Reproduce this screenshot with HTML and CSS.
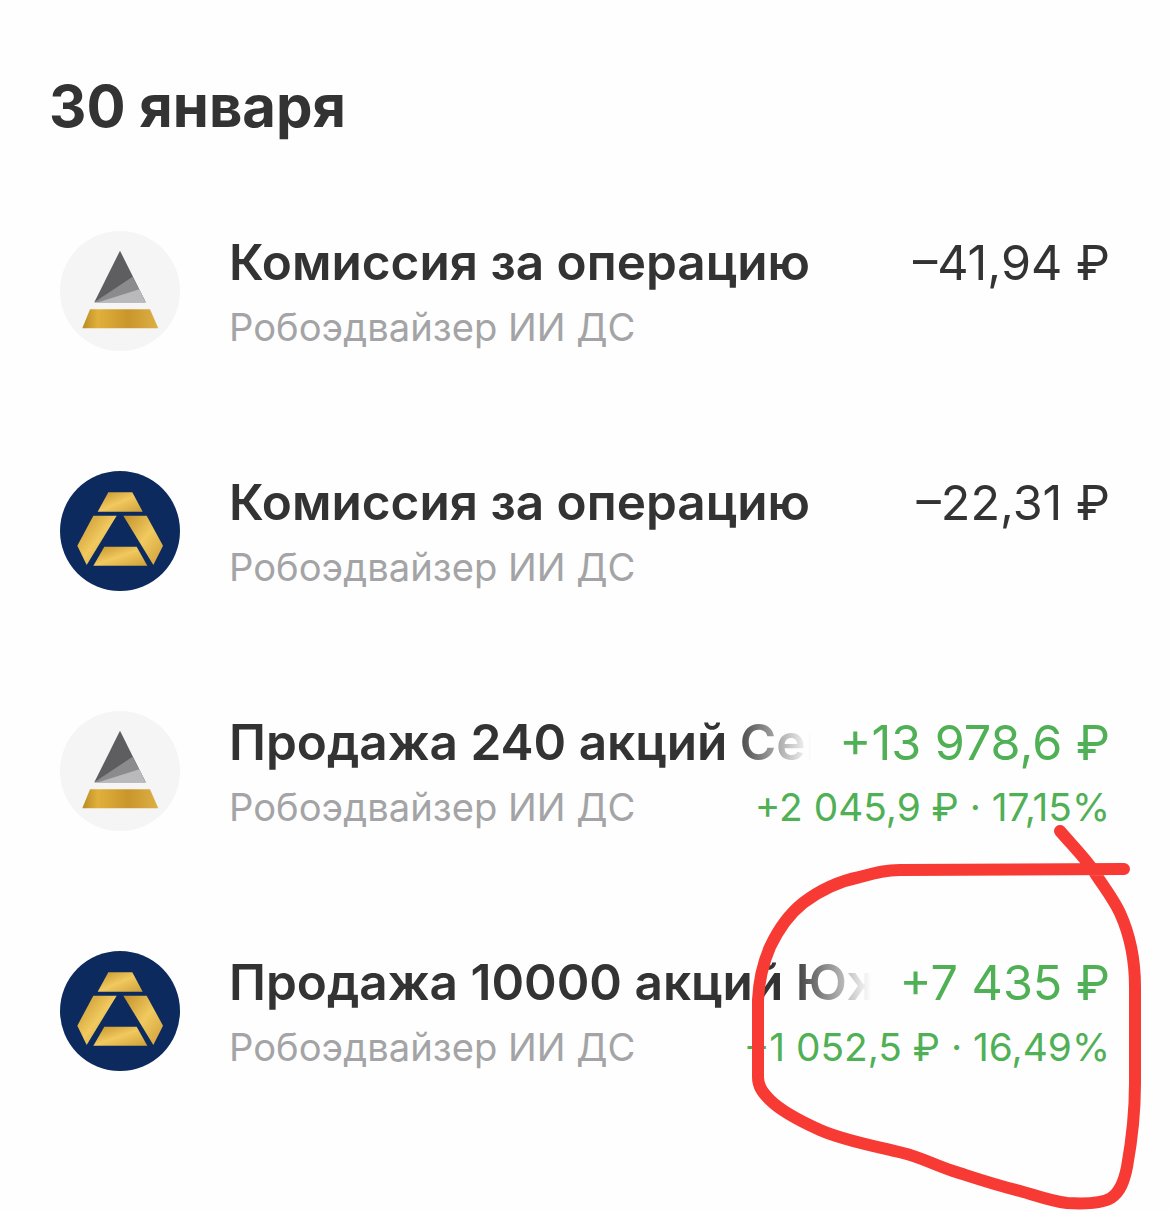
FILE: index.html
```html
<!DOCTYPE html>
<html>
<head>
<title>Операции</title>
<meta name="viewport" content="width=device-width, initial-scale=1">
<link rel="stylesheet" href="styles.css">
</head>
<body>
  <svg class="sprite" aria-hidden="true">
    <defs>
      <linearGradient id="gold" x1="0" y1="0" x2="1" y2="0">
        <stop offset="0" stop-color="#b98a22"/>
        <stop offset="0.2" stop-color="#e0b03c"/>
        <stop offset="0.6" stop-color="#c9962b"/>
        <stop offset="1" stop-color="#dcb045"/>
      </linearGradient>
      <linearGradient id="goldLight" x1="0" y1="0" x2="1" y2="1">
        <stop offset="0" stop-color="#c4912a"/>
        <stop offset="0.5" stop-color="#f0c95f"/>
        <stop offset="1" stop-color="#cf9f38"/>
      </linearGradient>
    </defs>
    <symbol id="logoGrey" viewBox="60 33 360 360">
      <circle cx="240" cy="213" r="180" fill="#f5f5f6"/>
      <polygon points="240,92 163,247 317,247" fill="#5e5e60"/>
      <polygon points="163,247 278,170 317,247" fill="#8b8b8d"/>
      <polygon points="175,247 298,208 317,247" fill="#b9b9bb"/>
      <polygon points="150,268 330,268 355,325 127,325" fill="url(#gold)"/>
    </symbol>
    <symbol id="logoBlue" viewBox="60 33 360 360">
      <circle cx="240" cy="213" r="180" fill="#0c2a5e"/>
      <polygon points="205,97 277,97 308,155 173,155" fill="url(#goldLight)"/>
      <polygon points="160,167 230,167 140,315 112,257" fill="url(#goldLight)"/>
      <polygon points="250,167 320,167 369,257 340,315" fill="url(#goldLight)"/>
      <polygon points="193,260 290,260 322,317 160,317" fill="url(#goldLight)"/>
    </symbol>
  </svg>

  <div class="container">
    <h1>30 января</h1>

    <div class="list">
      <div class="row">
        <svg class="logo"><use href="#logoGrey"/></svg>
        <div class="info">
          <div class="line">
            <div class="name">Комиссия за операцию</div>
            <div class="amount">–41,94 ₽</div>
          </div>
          <div class="line line-sub">
            <div class="sub">Робоэдвайзер ИИ ДС</div>
          </div>
        </div>
      </div>

      <div class="row">
        <svg class="logo"><use href="#logoBlue"/></svg>
        <div class="info">
          <div class="line">
            <div class="name">Комиссия за операцию</div>
            <div class="amount">–22,31 ₽</div>
          </div>
          <div class="line line-sub">
            <div class="sub">Робоэдвайзер ИИ ДС</div>
          </div>
        </div>
      </div>

      <div class="row">
        <svg class="logo"><use href="#logoGrey"/></svg>
        <div class="info">
          <div class="line">
            <div class="name name-fade">Продажа 240 акций Сег</div>
            <div class="amount amount-plus">+13 978,6 ₽</div>
          </div>
          <div class="line line-sub">
            <div class="sub">Робоэдвайзер ИИ ДС</div>
            <div class="profit">+2 045,9 ₽ · 17,15%</div>
          </div>
        </div>
      </div>

      <div class="row">
        <svg class="logo"><use href="#logoBlue"/></svg>
        <div class="info">
          <div class="line">
            <div class="name name-fade">Продажа 10000 акций Южу</div>
            <div class="amount amount-plus">+7 435 ₽</div>
          </div>
          <div class="line line-sub">
            <div class="sub">Робоэдвайзер ИИ ДС</div>
            <div class="profit">+1 052,5 ₽ · 16,49%</div>
          </div>
        </div>
      </div>
    </div>
  </div>

  <!-- hand drawn circle on top of the screenshot -->
  <svg class="scribble" viewBox="0 0 1170 1211">
    <path d="M1060 831 C1072 845 1085 858 1093 870 C1103 886 1113 898 1120 913 C1130 935 1135 960 1135 987 L1135 1083 C1135 1115 1131 1145 1127 1167 C1124 1182 1120 1192 1111 1198 C1103 1203 1085 1204 1067 1203 C1050 1201 1035 1195 1020 1191 C995 1185 975 1178 953 1171 C935 1165 920 1157 903 1153 C875 1146 845 1141 820 1130 C800 1121 780 1110 770 1100 C761 1091 758 1085 758 1077 L758 1000 C759 980 763 963 770 947 C778 930 788 915 803 903 C820 890 840 881 860 877 C875 873 885 870 900 870 L1124 869" />
  </svg>
</body>
</html>
```

FILE: styles.css
```css
body {
  font-family: Inter, "Noto Sans", sans-serif;
  background-color: #fefefe;
  color: #333333;
  margin: 0;
}

.sprite {
  position: absolute;
  width: 0;
  height: 0;
}

.container {
  padding: 72px 60px 0 49px;
}

h1 {
  font-size: 58px;
  font-weight: 700;
  line-height: 68px;
  margin: 0 0 91px 0;
}

.list {
  display: flex;
  flex-direction: column;
  gap: 120px;
  padding-left: 11px;
}

.row {
  display: flex;
  align-items: flex-start;
  height: 120px;
}

.logo {
  flex: none;
  width: 120px;
  height: 120px;
  margin-right: 49px;
}

.info {
  flex: 1;
  min-width: 0;
  margin-top: -1px;
}

.line {
  display: flex;
  justify-content: space-between;
}

.line-sub {
  margin-top: 9px;
}

.name {
  flex: 1;
  min-width: 0;
  font-size: 49.5px;
  font-weight: 600;
  line-height: 64px;
  white-space: nowrap;
  overflow: hidden;
}

.name-fade {
  -webkit-mask-image: linear-gradient(to right, #000 calc(100% - 80px), transparent 100%);
  mask-image: linear-gradient(to right, #000 calc(100% - 80px), transparent 100%);
}

.sub {
  font-size: 38.2px;
  line-height: 44px;
  color: #a4a4a6;
  white-space: nowrap;
}

.amount {
  flex: none;
  margin-left: 28px;
  font-size: 48.5px;
  line-height: 66px;
  white-space: nowrap;
}

.amount-plus {
  color: #50b055;
}

.profit {
  font-size: 38.8px;
  line-height: 44px;
  color: #50b055;
  white-space: nowrap;
}

.scribble {
  position: absolute;
  left: 0;
  top: 0;
  width: 1170px;
  height: 1211px;
  fill: none;
  stroke: #f73a33;
  stroke-width: 12;
  stroke-linecap: round;
  stroke-linejoin: round;
}
```
